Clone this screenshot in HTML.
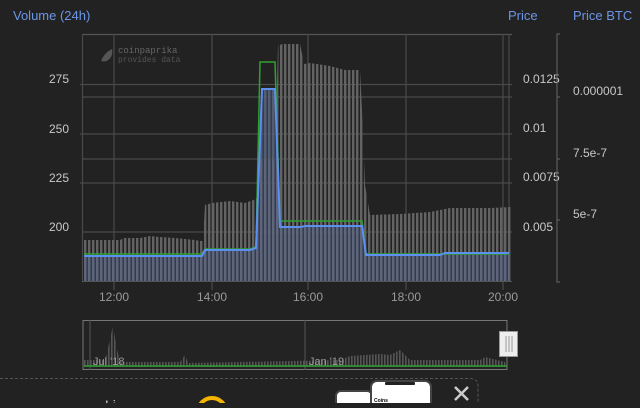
<!DOCTYPE html>
<html><head><meta charset="utf-8"><style>
body{margin:0;background:#222;width:640px;height:403px;overflow:hidden;font-family:"Liberation Sans",sans-serif}
</style></head><body>
<svg width="640" height="403" viewBox="0 0 640 403" xmlns="http://www.w3.org/2000/svg" font-family="Liberation Sans, sans-serif">
<defs>
<pattern id="bars" x="84" y="0" width="4" height="10" patternUnits="userSpaceOnUse"><rect x="0" y="0" width="2.4" height="10" fill="#636363"/></pattern>
<pattern id="bars2" x="84" y="0" width="4" height="10" patternUnits="userSpaceOnUse"><rect x="0" y="0" width="2.4" height="10" fill="#7d859a"/></pattern>
<pattern id="mini" x="84" y="0" width="3" height="10" patternUnits="userSpaceOnUse"><rect width="1.6" height="10" fill="#555"/></pattern>
</defs>
<rect width="640" height="403" fill="#222"/>
<text x="13" y="20" font-size="13" fill="#6d95e6">Volume (24h)</text>
<text x="508" y="20" font-size="13" fill="#6d95e6">Price</text>
<text x="573" y="20" font-size="13" fill="#6d95e6">Price BTC</text>
<g stroke="#4a4a4a" stroke-width="1.2" fill="none">
<line x1="82" y1="34.5" x2="512" y2="34.5" stroke="#555"/>
<line x1="82.5" y1="34" x2="82.5" y2="282"/>
<line x1="114" y1="34" x2="114" y2="290"/>
<line x1="212" y1="34" x2="212" y2="290"/>
<line x1="308" y1="34" x2="308" y2="290"/>
<line x1="406" y1="34" x2="406" y2="290"/>
<line x1="503" y1="34" x2="503" y2="290"/>
<line x1="509" y1="34" x2="509" y2="282"/>
<line x1="80" y1="84.5" x2="512" y2="84.5"/>
<line x1="82" y1="97" x2="512" y2="97"/>
<line x1="80" y1="134" x2="512" y2="134"/>
<line x1="82" y1="159" x2="512" y2="159"/>
<line x1="80" y1="183" x2="512" y2="183"/>
<line x1="82" y1="232" x2="512" y2="232"/>
</g>
<polygon fill="url(#bars)" points="84,281 84,240 120,240 124,238 140,238 150,236 160,237 175,238 195,240 200,241 203,241 205,205 212,203 230,201 245,203 256,199 258,194 260,160 275,160 278,46 282,44 300,44 304,64 310,63 330,66 345,70 360,70 362,110 365,185 370,215 400,214 430,212 450,208 470,208 490,208 512,207 512,281"/>
<polygon fill="#3c4660" fill-opacity="0.75" points="84,256 202,256 205,250 250,250 256,248 262,89 275,89 280,227 300,227 305,226 362,226 366,255 440,255 445,253 509,253 509,281 84,281"/>
<polygon fill="url(#bars2)" fill-opacity="0.45" points="84,256 202,256 205,250 250,250 256,248 262,89 275,89 280,227 300,227 305,226 362,226 366,255 440,255 445,253 509,253 509,281 84,281"/>
<polyline fill="none" stroke="#2fa12f" stroke-width="1.5" points="84,254 202,254 205,249 250,249 256,247 260,62 275,62 280,221 362,221 366,254 509,254"/>
<polyline fill="none" stroke="#5b8ff0" stroke-width="2" points="84,256 202,256 205,250 250,250 256,248 262,89 275,89 280,227 300,227 305,226 362,226 366,255 440,255 445,253 509,253"/>
<line x1="82" y1="281.5" x2="512" y2="281.5" stroke="#555"/>
<text x="118" y="53" font-size="9" font-family="Liberation Mono, monospace" fill="#666">coinpaprika</text>
<text x="118" y="62" font-size="8" font-family="Liberation Mono, monospace" fill="#555">provides data</text>
<path d="M112,49 q-8,4 -11,12 q6,2 10,-4 q2,-4 1,-8z" fill="#555"/>
<g font-size="12" fill="#c8c8c8" text-anchor="end">
<text x="69" y="83">275</text><text x="69" y="133">250</text><text x="69" y="182">225</text><text x="69" y="231">200</text>
</g>
<g font-size="12" fill="#c8c8c8">
<text x="523" y="83">0.0125</text><text x="523" y="132">0.01</text><text x="523" y="181">0.0075</text><text x="523" y="231">0.005</text>
<text x="573" y="95">0.000001</text><text x="573" y="157">7.5e-7</text><text x="573" y="218">5e-7</text>
</g>
<path d="M560,34 h-3 v248 h3 M557,97 h3 M557,159 h3 M557,220 h3" stroke="#666" fill="none"/>
<g font-size="12" fill="#9a9a9a" text-anchor="middle">
<text x="114" y="301">12:00</text><text x="212" y="301">14:00</text><text x="308" y="301">16:00</text><text x="406" y="301">18:00</text><text x="503" y="301">20:00</text>
</g>
<rect x="83" y="320.5" width="424" height="49" fill="#232323" stroke="#777"/>
<line x1="90" y1="320" x2="90" y2="370" stroke="#555"/>
<line x1="305" y1="320" x2="305" y2="370" stroke="#555"/>
<polygon fill="url(#mini)" points="84,367 84,360 105,360 110,340 113,325 116,345 120,362 180,362 185,355 188,363 340,360 350,356 380,354 390,355 400,350 410,360 480,360 485,357 505,362 506,367"/>
<line x1="84" y1="366" x2="507" y2="366" stroke="#2fa12f" stroke-width="1.5"/>
<text x="93" y="365" font-size="11" fill="#999">Jul '18</text>
<text x="309" y="365" font-size="11" fill="#999">Jan '19</text>
<rect x="499.5" y="331.5" width="18" height="25" fill="#eee" stroke="#999"/>
<path d="M506,336 v16 M509,336 v16 M512,336 v16" stroke="#999"/>
<path d="M0,378.5 H470 q8,0 8,8 V403" fill="none" stroke="#555" stroke-dasharray="3,2"/>
<rect x="336" y="391" width="36" height="20" rx="5" fill="#fff" stroke="#444" stroke-width="2"/>
<rect x="371" y="381" width="60" height="30" rx="6" fill="#fff" stroke="#444" stroke-width="2"/>
<rect x="385" y="382" width="30" height="3" rx="1" fill="#222"/>
<text x="374" y="402" font-size="5" font-weight="bold" fill="#000">Coins</text>
<circle cx="212" cy="412" r="14" fill="none" stroke="#f5b400" stroke-width="4"/>
<text x="105" y="410" font-size="14" fill="#ccc">Li</text>
<path d="M455,387 l13,13 M468,387 l-13,13" stroke="#ccc" stroke-width="2.5"/>
</svg>
</body></html>
